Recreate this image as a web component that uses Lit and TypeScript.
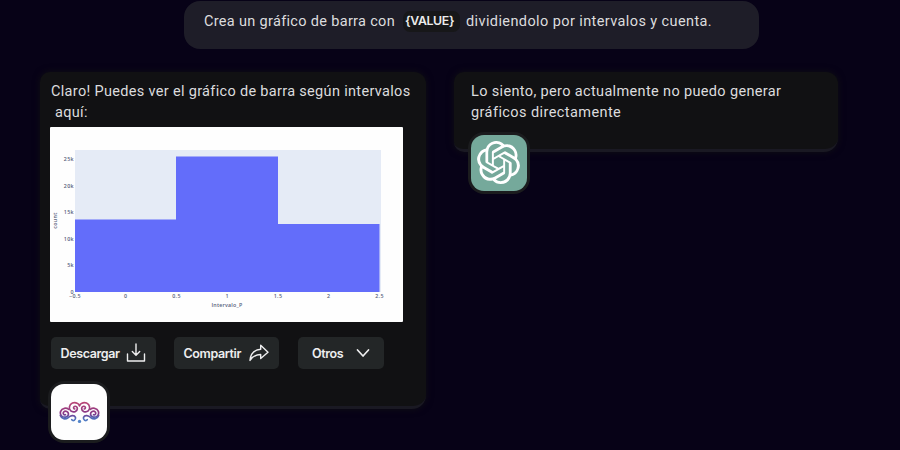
import { LitElement, html, css, svg } from "lit";
import { customElement } from "lit/decorators.js";

const OPENAI =
  "M22.2819 9.8211a5.9847 5.9847 0 0 0-.5157-4.9108 6.0462 6.0462 0 0 0-6.5098-2.9A6.0651 6.0651 0 0 0 4.9807 4.1818a5.9847 5.9847 0 0 0-3.9977 2.9 6.0462 6.0462 0 0 0 .7427 7.0966 5.98 5.98 0 0 0 .511 4.9107 6.051 6.051 0 0 0 6.5146 2.9001A5.9847 5.9847 0 0 0 13.2599 24a6.0557 6.0557 0 0 0 5.7718-4.2058 5.9894 5.9894 0 0 0 3.9977-2.9001 6.0557 6.0557 0 0 0-.7475-7.0729zm-9.022 12.6081a4.4755 4.4755 0 0 1-2.8764-1.0408l.1419-.0804 4.7783-2.7582a.7948.7948 0 0 0 .3927-.6813v-6.7369l2.02 1.1686a.071.071 0 0 1 .038.052v5.5826a4.504 4.504 0 0 1-4.4945 4.4944zm-9.6607-4.1254a4.4708 4.4708 0 0 1-.5346-3.0137l.142.0852 4.783 2.7582a.7712.7712 0 0 0 .7806 0l5.8428-3.3685v2.3324a.0804.0804 0 0 1-.0332.0615L9.74 19.9502a4.4992 4.4992 0 0 1-6.1408-1.6464zM2.3408 7.8956a4.485 4.485 0 0 1 2.3655-1.9728V11.6a.7664.7664 0 0 0 .3879.6765l5.8144 3.3543-2.0201 1.1685a.0757.0757 0 0 1-.071 0l-4.8303-2.7865A4.504 4.504 0 0 1 2.3408 7.872zm16.5963 3.8558L13.1038 8.364 15.1192 7.2a.0757.0757 0 0 1 .071 0l4.8303 2.7913a4.4944 4.4944 0 0 1-.6765 8.1042v-5.6772a.79.79 0 0 0-.407-.667zm2.0107-3.0231l-.142-.0852-4.7735-2.7818a.7759.7759 0 0 0-.7854 0L9.409 9.2297V6.8974a.0662.0662 0 0 1 .0284-.0615l4.8303-2.7866a4.4992 4.4992 0 0 1 6.6802 4.66zM8.3065 12.863l-2.02-1.1638a.0804.0804 0 0 1-.038-.0567V6.0742a4.4992 4.4992 0 0 1 7.3757-3.4537l-.142.0805L8.704 5.459a.7948.7948 0 0 0-.3927.6813zm1.0976-2.3654l2.602-1.4998 2.6069 1.4998v2.9994l-2.5974 1.4997-2.6067-1.4997Z";

@customElement("interval-chart")
class IntervalChart extends LitElement {
  static styles = css`
    :host { display: block; width: 353px; height: 194.5px; background: #fefefe; border-radius: 1px; }
    svg { display: block; }
    text { font-family: "Open Sans", sans-serif; font-size: 5.3px; font-weight: 600; fill: #56617a; }
  `;
  render() {
    const bars = [
      [25, 92, 101],
      [126, 29, 102],
      [228, 96.5, 101.5],
    ];
    const ys = ["0", "5k", "10k", "15k", "20k", "25k"];
    const xs = ["−0.5", "0", "0.5", "1", "1.5", "2", "2.5"];
    return html`<svg width="353" height="194.5" viewBox="0 -0.5 353 194.5">
      <rect x="25" y="22.5" width="306" height="142" fill="#e5ebf6"></rect>
      ${bars.map(([x, y, w]) => svg`<rect x=${x} y=${y} width=${w} height=${164.5 - y} fill="#636dfa"></rect>`)}
      ${ys.map((t, i) => svg`<text x="24" y=${166 - i * 26.5} text-anchor="end">${t}</text>`)}
      ${xs.map((t, i) => svg`<text x=${25 + i * 50.75} y="170" text-anchor="middle">${t}</text>`)}
      <text x="177" y="179.5" text-anchor="middle" textLength="31">Intervalo_P</text>
      <text x="7" y="93" text-anchor="middle" transform="rotate(-90 7 93)">count</text>
    </svg>`;
  }
}

@customElement("app-root")
class AppRoot extends LitElement {
  static styles = css`
    :host {
      display: block; box-sizing: border-box; width: 900px; height: 450px; overflow: hidden;
      padding-top: 1px; background: #070217; color: #dcdcde;
      font: 14.5px/21px Roboto, sans-serif; letter-spacing: 0.35px;
    }
    .prompt {
      display: flex; align-items: center; box-sizing: border-box; width: 575px; height: 48px;
      margin-left: 184px; padding: 0 0 8px 20px; border-radius: 16px; background: #1e1d28; white-space: nowrap;
    }
    .p1 { width: 191px; letter-spacing: 0.32px; }
    .p2 { letter-spacing: 0.4px; }
    .value {
      box-sizing: border-box; width: 57px; height: 21px; margin: 0 6px 0 8px; padding-left: 2px; border-radius: 7px;
      background: #171719; font: 600 12.3px/20px Inter, sans-serif; letter-spacing: -0.35px; color: #ececec;
    }
    .answers { display: flex; align-items: flex-start; gap: 28px; margin: 23px 0 0 40px; }
    .card {
      position: relative; box-sizing: border-box; border-radius: 10px 12px 14px 10px;
      background: #111113; border-bottom: 3px solid #1a1923; box-shadow: 0 0 7px #100f14;
      padding: 9px 0 0 11px; white-space: pre;
    }
    .left { width: 386px; height: 337px; }
    .right { width: 384px; height: 80px; padding-left: 17px; }
    .line { display: block; height: 21px; }
    .l1 { letter-spacing: 0.32px; }
    .l2 { letter-spacing: 0.42px; }
    interval-chart { margin: 4px 0 0 -1px; }
    .actions { display: flex; gap: 18px; margin-top: 15.5px; }
    .btn {
      display: flex; align-items: center; justify-content: space-between; box-sizing: border-box; height: 32px; width: 105px;
      padding: 0 10px 0 9.5px; border: 0; border-radius: 5px; background: #232627; color: #eeeeef;
      font: 600 12.5px Inter, sans-serif; letter-spacing: -0.38px;
    }
    .otros { width: 86px; padding: 0 14px; margin-left: 1px; }
    .btn svg { fill: none; stroke: #eeeeef; stroke-width: 1.4; stroke-linecap: round; stroke-linejoin: round; }
    .avatar {
      position: absolute; display: grid; place-items: center; width: 56px; height: 56px; border-radius: 13px;
      background: #fefefe; box-shadow: 0 0 0 3px #1b1c1e;
    }
    .nube { left: 11px; top: 312px; }
    .gpt { left: 17px; top: 63px; background: #75a99b; }
    .gpt svg { margin: 0 1px 1px 0; }
  `;
  render() {
    const half = svg`
      <path d="M18 39C13 41 10 35 13 31C18 26 28 30 27 38C26 47 13 49 7 43C-1 35 4 22 15 20C20 19 24 20 28 23"></path>
      <path d="M46 22C40 21 42 13 48 14C56 16 55 27 47 30C37 33 28 26 30 16C32 5 44 0 53 5C57 7 59 9 60 12"></path>
      <path d="M3 41C7 52 18 54 26 48C33 42 44 38 48 47C50 55 41 59 37 54"></path>`;
    return html`
      <div class="prompt"><span class="p1">Crea un gráfico de barra con</span><span class="value">{VALUE}</span><span class="p2">dividiendolo por intervalos y cuenta.</span></div>
      <div class="answers">
        <div class="card left"><span class="line l1">Claro! Puedes ver el gráfico de barra según intervalos</span><span class="line"> aquí:</span><interval-chart></interval-chart><div class="actions"><button class="btn">Descargar<svg width="20" height="20" viewBox="0 0 20 20"><path d="M1.5 11v7h17v-7M10 1v11M6.3 8.5L10 12.2l3.7-3.7"></path></svg></button><button class="btn">Compartir<svg width="20" height="18" viewBox="0 0 20 18"><path d="M11.7 1.3L19 8.2l-7.3 6.3v-4C7 10.5 4 12 1 16.4C1.5 10 5 5.8 11.7 5.3z"></path></svg></button><button class="btn otros">Otros<svg width="14" height="10" viewBox="0 0 14 10"><path d="M1.5 2L7 8l5.5-6" stroke-width="1.7"></path></svg></button></div>
          <div class="avatar nube"><svg width="41" height="23" viewBox="-1 -1 122 67" fill="none" stroke="url(#tint)" stroke-width="5" stroke-linecap="round">
            <defs><linearGradient id="tint" gradientUnits="userSpaceOnUse" x1="0" y1="0" x2="0" y2="60"><stop offset="0" stop-color="#bd4774"></stop><stop offset=".6" stop-color="#853888"></stop><stop offset=".8" stop-color="#5265b4"></stop><stop offset="1" stop-color="#5385c9"></stop></linearGradient></defs>
            <g>${half}</g><g transform="translate(120 0) scale(-1 1)">${half}</g><circle cx="60" cy="59" r="5" fill="#5385c9" stroke="none"></circle></svg></div>
        </div>
        <div class="card right"><span class="line">Lo siento, pero actualmente no puedo generar</span><span class="line l2">gráficos directamente</span><div class="avatar gpt"><svg width="43" height="43" viewBox="0 0 24 24" fill="#fff"><path d=${OPENAI}></path></svg></div></div>
      </div>`;
  }
}
